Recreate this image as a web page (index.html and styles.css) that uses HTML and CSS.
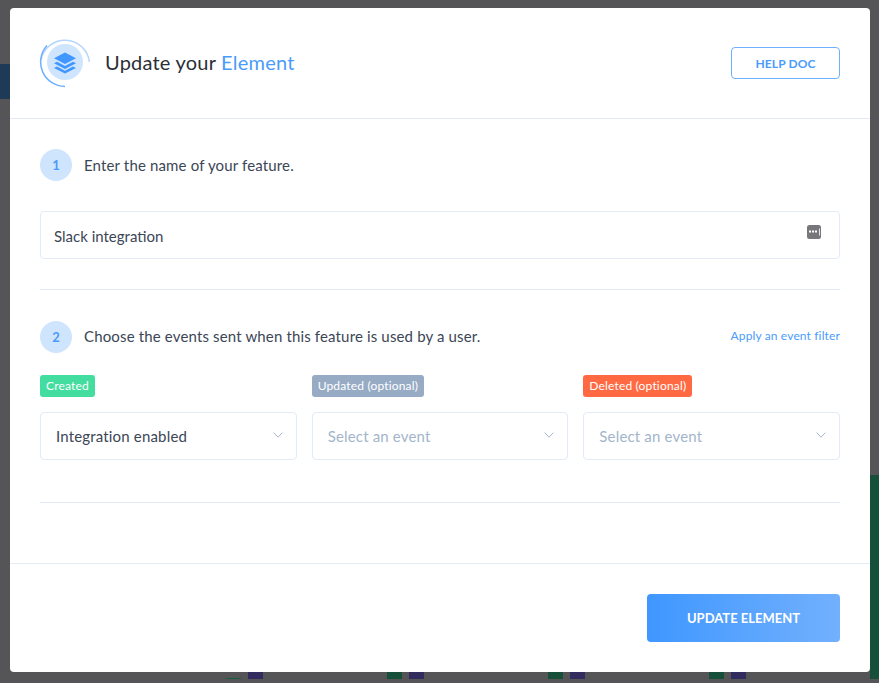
FILE: index.html
```html
<!DOCTYPE html>
<html lang="en">
<head>
<meta charset="utf-8">
<title>Update your Element</title>
<link rel="stylesheet" href="styles.css">
</head>
<body>
<div class="backdrop">
  <span class="bg bg-nav"></span>
  <span class="bg bg-side"></span>
  <span class="bg bg-g1"></span><span class="bg bg-p1"></span>
  <span class="bg bg-g2"></span><span class="bg bg-p2"></span>
  <span class="bg bg-g3"></span><span class="bg bg-p3"></span>
  <span class="bg bg-g4"></span><span class="bg bg-p4"></span>
  <div class="modal">
    <header class="head">
      <div class="title-wrap">
        <svg class="logo" width="52" height="52" viewBox="0 0 52 52" fill="none">
          <circle cx="26" cy="26" r="18" fill="#cfe4fd"/>
          <path d="M2 24A24.500 24.500 0 0 1 50.400 26" stroke="#b5d5fc" stroke-width="1.500"/>
          <path d="M26 50.500A24.500 24.500 0 0 1 8 9.500" stroke="#6db0fd" stroke-width="1.500"/>
          <path d="M26 16.500l11 5.700-11 5.800-11-5.800z" fill="#3f97ff"/>
          <path d="M18 25.800l8 4.200 8-4.200 3 1.500-11 5.800-11-5.800z" fill="#3f97ff"/>
          <path d="M18 30.500l8 4.200 8-4.200 3 1.500-11 5.500-11-5.500z" fill="#3f97ff"/>
        </svg>
        <h1 class="title">Update your <span class="accent">Element</span></h1>
      </div>
      <a class="help">HELP DOC</a>
    </header>
    <main class="body">
      <section class="step-one">
        <div class="step">
          <span class="num">1</span>
          <span class="step-text">Enter the name of your feature.</span>
        </div>
        <div class="input">
          <span>Slack integration</span>
          <svg class="dots" width="14" height="14" viewBox="0 0 14 14"><rect width="14" height="14" rx="2.500" fill="#77777b"/><rect x="2" y="5.500" width="2" height="2" fill="#fff"/><rect x="5" y="5.500" width="2" height="2" fill="#fff"/><rect x="8" y="5.500" width="2" height="2" fill="#fff"/><rect x="12" y="3.500" width="1" height="7" fill="#e5e5e5"/></svg>
        </div>
      </section>
      <section class="step-two">
        <div class="step">
          <span class="num">2</span>
          <span class="step-text step-text-up">Choose the events sent when this feature is used by a user.</span>
          <a class="filter">Apply an event filter</a>
        </div>
        <div class="events">
          <div class="event">
            <span class="tag tag-green">Created</span>
            <div class="select"><span class="value">Integration enabled</span><svg class="chev" width="10" height="6" viewBox="0 0 10 6" fill="none"><path d="M.7.700L5 5.200 9.300.700" stroke="#a3b5cb"/></svg></div>
          </div>
          <div class="event">
            <span class="tag tag-grey">Updated (optional)</span>
            <div class="select"><span class="placeholder">Select an event</span><svg class="chev" width="10" height="6" viewBox="0 0 10 6" fill="none"><path d="M.7.700L5 5.200 9.300.700" stroke="#a3b5cb"/></svg></div>
          </div>
          <div class="event">
            <span class="tag tag-red">Deleted (optional)</span>
            <div class="select"><span class="placeholder">Select an event</span><svg class="chev" width="10" height="6" viewBox="0 0 10 6" fill="none"><path d="M.7.700L5 5.200 9.300.700" stroke="#a3b5cb"/></svg></div>
          </div>
        </div>
      </section>
    </main>
    <footer class="foot">
      <a class="submit">UPDATE ELEMENT</a>
    </footer>
  </div>
</div>
</body>
</html>
```

FILE: styles.css
```css
* { box-sizing: border-box; }
html, body { margin: 0; height: 100%; }
body {
  font-family: Lato, "Liberation Sans", sans-serif;
  overflow: hidden;
}
.backdrop {
  position: relative;
  width: 879px;
  height: 683px;
  background: #555557;
  padding: 8px 9px 11px 10px;
}
.bg { position: absolute; }
.bg-nav { left: 0; top: 64px; width: 10px; height: 35px; background: #1f3a56; }
.bg-side { left: 870px; top: 475px; width: 9px; height: 204px; background: #17503a; }
.bg-g1 { left: 226px; top: 678px; width: 15px; height: 1px; background: #17603f; }
.bg-p1 { left: 248px; top: 672px; width: 15px; height: 7px; background: #312b5e; }
.bg-g2 { left: 387px; top: 672px; width: 15px; height: 7px; background: #17503a; }
.bg-p2 { left: 409px; top: 672px; width: 15px; height: 7px; background: #312b5e; }
.bg-g3 { left: 548px; top: 672px; width: 15px; height: 7px; background: #17503a; }
.bg-p3 { left: 570px; top: 672px; width: 15px; height: 7px; background: #312b5e; }
.bg-g4 { left: 709px; top: 672px; width: 15px; height: 7px; background: #17503a; }
.bg-p4 { left: 731px; top: 672px; width: 15px; height: 7px; background: #312b5e; }

.modal {
  position: relative;
  height: 664px;
  background: #fff;
  border-radius: 4px;
  display: flex;
  flex-direction: column;
}
.head {
  height: 111px;
  flex: none;
  padding: 0 30px;
  display: flex;
  align-items: center;
  justify-content: space-between;
  border-bottom: 1px solid #e3ecf6;
}
.title-wrap { display: flex; align-items: center; gap: 14px; }
.logo { display: block; margin-left: -1px; margin-top: -2px; }
.title { margin: 0 0 2px; font-size: 20px; font-weight: 400; color: #2b2f36; line-height: 24px; letter-spacing: .22px; }
.accent { color: #4a9bfb; }
.help {
  width: 109px;
  height: 32px;
  border: 1px solid #6db0fd;
  border-radius: 4px;
  color: #4a9bfb;
  font-size: 12px;
  font-weight: 700;
  letter-spacing: .1px;
  display: flex;
  align-items: center;
  justify-content: center;
}
.body { flex: 1; padding: 0 30px; }
.step-one { padding: 30px 0; border-bottom: 1px solid #e3ecf6; height: 171px; }
.step { display: flex; align-items: center; gap: 12px; height: 32px; }
.num {
  width: 32px;
  height: 32px;
  border-radius: 50%;
  background: #cfe4fd;
  color: #4a9bfb;
  font-size: 13px;
  font-weight: 700;
  display: flex;
  align-items: center;
  justify-content: center;
  flex: none;
}
.step-text { font-size: 15px; letter-spacing: .15px; color: #3b4656; }
.step-text-up { margin-top: -2px; }
.input {
  margin-top: 30px;
  height: 48px;
  border: 1px solid #e3ecf6;
  border-radius: 4px;
  padding: 2px 13px 0;
  display: flex;
  align-items: center;
  justify-content: space-between;
  font-size: 15px;
  color: #3b4656;
}
.dots { margin-top: -9px; margin-right: 5px; }
.step-two { padding-top: 31px; height: 213px; border-bottom: 1px solid #e3ecf6; }
.filter { margin-left: auto; margin-top: -3px; font-size: 12px; letter-spacing: .14px; color: #4a9bfb; }
.events { display: grid; grid-template-columns: repeat(3, 1fr); gap: 15px; margin-top: 22px; }
.event { display: flex; flex-direction: column; align-items: flex-start; gap: 15px; }
.tag {
  height: 22px;
  padding: 0 6px;
  border-radius: 3px;
  color: #fff;
  font-size: 12px;
  letter-spacing: .17px;
  line-height: 21px;
}
.tag-green { background: #43dd9f; }
.tag-grey { background: #97abc5; }
.tag-red { background: #ff6a42; }
.select {
  align-self: stretch;
  height: 48px;
  border: 1px solid #e3ecf6;
  border-radius: 4px;
  padding: 0 13px 0 15px;
  display: flex;
  align-items: center;
  justify-content: space-between;
  font-size: 15px;
  letter-spacing: .17px;
}
.chev { margin-top: -3px; }
.value { color: #3b4656; }
.placeholder { color: #a3b5cb; }
.foot {
  flex: none;
  height: 109px;
  margin-top: auto;
  border-top: 1px solid #e3ecf6;
  padding: 30px;
  display: flex;
  justify-content: flex-end;
}
.submit {
  width: 193px;
  height: 48px;
  border-radius: 4px;
  background: linear-gradient(90deg, #3f97ff, #72b0fd);
  color: #fff;
  font-size: 13px;
  font-weight: 700;
  display: flex;
  align-items: center;
  justify-content: center;
}
```
